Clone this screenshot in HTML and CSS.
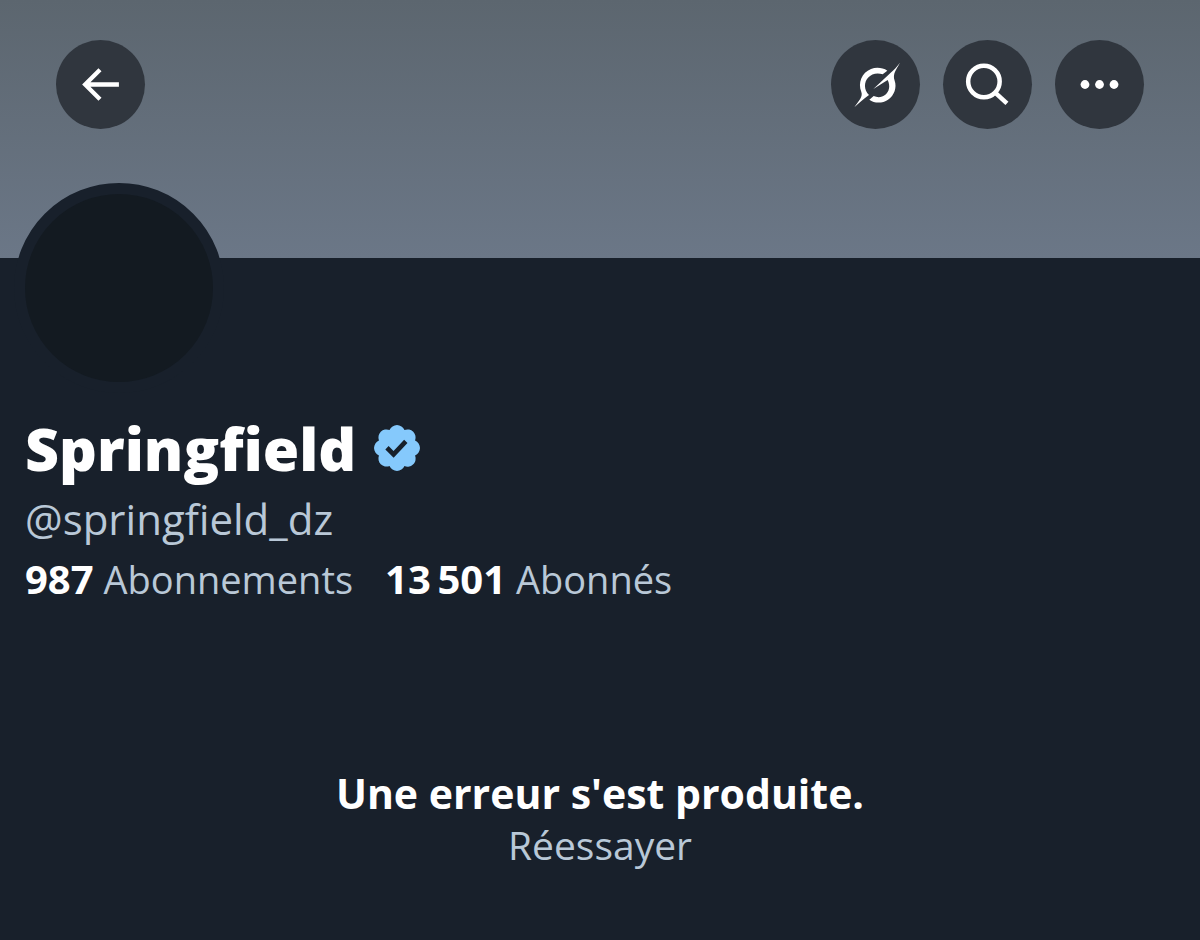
FILE: index.html
```html
<!DOCTYPE html>
<html lang="fr">
<head>
<meta charset="utf-8">
<meta name="viewport" content="width=device-width, initial-scale=1">
<title>Springfield (@springfield_dz)</title>
<link rel="stylesheet" href="styles.css">
</head>
<body>
<header class="banner">
  <button class="round-button" type="button" aria-label="Retour">
    <svg class="icon" viewBox="0 0 44 44" fill="none" stroke="currentColor" stroke-width="4.200"><path d="M40 22H7M21.500 7.500L7 22l14.500 14.500"/></svg>
  </button>
  <nav class="actions" aria-label="Actions du profil">
    <button class="round-button" type="button" aria-label="Grok">
      <svg class="icon icon-grok" viewBox="-3 0 162 162" fill="currentColor"><path d="M112 38C98 29 79 27 63 33C35 44 23 75 34 102C39 116 28 126 13 148C28 133 40 124 57 111C41 95 42 72 54 59C65 47 82 43 98 49Z"/><path d="M150 14C140 27 131 36 122 44L70 93L113 66C122 85 117 101 106 110C96 118 84 120 71 114L58 125C74 137 98 136 114 125C133 112 141 88 134 68C127 47 139 35 150 14Z"/></svg>
    </button>
    <button class="round-button" type="button" aria-label="Rechercher">
      <svg class="icon" viewBox="0 0 44 44" fill="none" stroke="currentColor" stroke-width="4.400"><circle cx="18.500" cy="19" r="15.400"/><path d="M29.500 30L41 40.500"/></svg>
    </button>
    <button class="round-button" type="button" aria-label="Plus">
      <svg class="icon" viewBox="0 0 44 44" fill="currentColor"><circle cx="7.800" cy="22" r="4.300"/><circle cx="22" cy="22" r="4.300"/><circle cx="36.200" cy="22" r="4.300"/></svg>
    </button>
  </nav>
</header>
<main class="profile">
  <div class="avatar" role="img" aria-label="Photo de profil"></div>
  <div class="name-row">
    <h1 class="name">Springfield</h1>
    <svg class="badge" viewBox="1.600 1.600 18.800 18.800" role="img" aria-label="Compte certifié"><path fill="#85c9fc" d="M20.396 11c-.018-.646-.215-1.275-.57-1.816-.354-.54-.852-.972-1.438-1.246.223-.607.27-1.264.14-1.897-.131-.634-.437-1.218-.882-1.687-.47-.445-1.053-.75-1.687-.882-.633-.13-1.29-.083-1.897.14-.273-.587-.704-1.086-1.245-1.44S11.647 1.62 11 1.604c-.646.017-1.273.213-1.813.568s-.969.854-1.24 1.44c-.608-.223-1.267-.272-1.902-.14-.635.13-1.22.436-1.69.882-.445.47-.749 1.055-.878 1.688-.13.633-.08 1.29.144 1.896-.587.274-1.087.705-1.443 1.245-.356.54-.555 1.17-.574 1.817.02.647.218 1.276.574 1.817.356.54.856.972 1.443 1.245-.224.606-.274 1.263-.144 1.896.13.634.433 1.218.877 1.688.47.443 1.054.747 1.687.878.633.132 1.29.084 1.897-.136.274.586.705 1.084 1.246 1.439.54.354 1.17.551 1.816.569.647-.016 1.276-.213 1.817-.567s.972-.854 1.245-1.44c.604.239 1.266.296 1.903.164.636-.132 1.22-.447 1.68-.907.46-.46.776-1.044.908-1.681s.075-1.299-.165-1.903c.586-.274 1.084-.705 1.439-1.246.354-.54.551-1.17.569-1.816z"/><path fill="none" stroke="#17202b" stroke-width="1.900" d="M6.900 10.900l2.700 2.700 5-5.300"/></svg>
  </div>
  <p class="handle">@springfield_dz</p>
  <div class="stats">
    <a class="stat" href="#abonnements"><strong class="count">987</strong> Abonnements</a>
    <a class="stat" href="#abonnes"><strong class="count">13&#8201;501</strong> Abonnés</a>
  </div>
</main>
<section class="error" role="alert">
  <h2 class="error-title">Une erreur s'est produite.</h2>
  <button class="retry" type="button">Réessayer</button>
</section>
</body>
</html>
```
FILE: styles.css
```css
* {
  box-sizing: border-box;
}

body {
  margin: 0;
  min-height: 100vh;
  background: #18202b;
  color: #fff;
  font-family: "Open Sans", "Noto Sans", sans-serif;
}

h1, h2, p {
  margin: 0;
}

button {
  border: 0;
  padding: 0;
  font: inherit;
  cursor: pointer;
}

.banner {
  display: flex;
  justify-content: space-between;
  align-items: flex-start;
  padding: 40px 56px 129px;
  background: linear-gradient(#5c666f, #6b7787);
}

.actions {
  display: flex;
  gap: 23px;
}

.round-button {
  display: grid;
  place-items: center;
  width: 89px;
  height: 89px;
  border-radius: 50%;
  background: #30363e;
  color: #fff;
}

.icon {
  width: 45px;
  height: 45px;
}

.icon-grok {
  width: 54px;
  height: 54px;
}

.profile {
  padding: 0 25px;
}

.avatar {
  width: 210px;
  height: 210px;
  margin: -75px 0 0 -11px;
  border: 11px solid #18202b;
  border-radius: 50%;
  background: #131a21;
}

.name-row {
  display: flex;
  align-items: center;
  gap: 18px;
  margin-top: 15px;
}

.name {
  font-size: 59px;
  font-weight: 800;
  line-height: 80px;
}

.badge {
  width: 46px;
  height: 46px;
}

.handle {
  margin-top: 1px;
  color: #b9c8d7;
  font-size: 42px;
  line-height: 60px;
}

.stats {
  display: flex;
  flex-wrap: wrap;
  gap: 32px;
  color: #b9c8d7;
  font-size: 38px;
  line-height: 60px;
}

.stat {
  color: inherit;
  text-decoration: none;
}

.count {
  color: #fff;
  font-size: 40px;
  font-weight: 700;
}

.error {
  display: flex;
  flex-direction: column;
  align-items: center;
  padding: 158px 24px 64px;
  text-align: center;
}

.error-title {
  font-size: 41px;
  font-weight: 700;
  line-height: 52px;
}

.retry {
  background: none;
  color: #b9c8d7;
  font-size: 39px;
  line-height: 52px;
}
```
